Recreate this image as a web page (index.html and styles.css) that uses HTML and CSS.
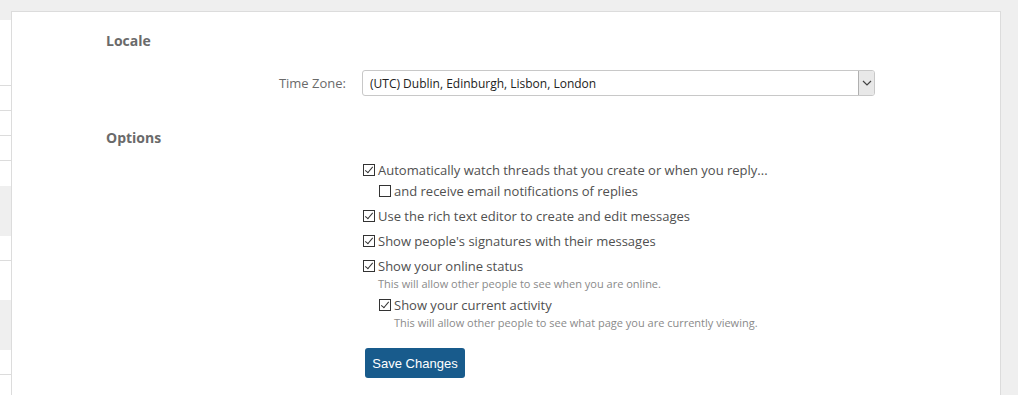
FILE: index.html
```html
<!DOCTYPE html>
<html>
<head>
<meta charset="utf-8">
<link rel="stylesheet" href="styles.css">
</head>
<body>
<div class="sidebar">
  <div class="srow s-gray" style="height:20px"></div>
  <div class="srow line" style="height:66px"></div>
  <div class="srow line" style="height:25px"></div>
  <div class="srow line" style="height:25px"></div>
  <div class="srow line" style="height:25px"></div>
  <div class="srow" style="height:25px"></div>
  <div class="srow s-gray" style="height:50px"></div>
  <div class="srow line" style="height:25px"></div>
  <div class="srow" style="height:39px"></div>
  <div class="srow s-gray" style="height:50px"></div>
  <div class="srow line" style="height:25px"></div>
  <div class="srow" style="height:20px"></div>
</div>
<div class="main">
  <div class="panel">
    <div class="content">
      <h3 class="heading">Locale</h3>
      <div class="form-row">
        <div class="label">Time Zone:</div>
        <div class="control">
          <div class="select">
            <span class="select-text">(UTC) Dublin, Edinburgh, Lisbon, London</span>
            <span class="select-arrow"><svg width="10" height="6" viewBox="0 0 10 6"><path d="M1 1 L5 5 L9 1" fill="none" stroke="#444" stroke-width="1.2"/></svg></span>
          </div>
        </div>
      </div>
      <h3 class="heading heading-options">Options</h3>
      <div class="form-row">
        <div class="label"></div>
        <div class="control">
          <ul class="checks">
            <li>
              <label class="check"><span class="box on"></span>Automatically watch threads that you create or when you reply...</label>
              <ul class="sub sub-first">
                <li><label class="check"><span class="box"></span>and receive email notifications of replies</label></li>
              </ul>
            </li>
            <li><label class="check"><span class="box on"></span>Use the rich text editor to create and edit messages</label></li>
            <li><label class="check"><span class="box on"></span>Show people's signatures with their messages</label></li>
            <li>
              <label class="check"><span class="box on"></span>Show your online status</label>
              <p class="hint">This will allow other people to see when you are online.</p>
              <ul class="sub sub-gap">
                <li>
                  <label class="check"><span class="box on"></span>Show your current activity</label>
                  <p class="hint">This will allow other people to see what page you are currently viewing.</p>
                </li>
              </ul>
            </li>
          </ul>
          <button class="btn">Save Changes</button>
        </div>
      </div>
    </div>
  </div>
</div>
</body>
</html>
```

FILE: styles.css
```css
html, body {
  margin: 0;
  padding: 0;
}
body {
  background: #efefef;
  display: flex;
  height: 395px;
  overflow: hidden;
  font-family: "Open Sans", "DejaVu Sans", sans-serif;
}
.sidebar {
  width: 11px;
  flex: none;
  display: flex;
  flex-direction: column;
  background: #fff;
}
.srow {
  flex: none;
  background: #fff;
  box-sizing: border-box;
}
.srow.line {
  border-bottom: 1px solid #dcdcdc;
}
.s-gray {
  background: #efefef;
}
.main {
  flex: 1;
  padding: 11px 17px 0 0;
}
.panel {
  background: #fff;
  border: 1px solid #dcdcdc;
  border-bottom: none;
  height: 100%;
  box-sizing: border-box;
}
.content {
  padding: 19px 0 0 94px;
}
.heading {
  margin: 0;
  font-size: 14px;
  font-weight: 700;
  line-height: 20px;
  color: #6a6a6a;
}
.heading-options {
  margin-top: 32px;
  margin-bottom: 12px;
}
.form-row {
  display: flex;
  margin-top: 19px;
}
.heading-options + .form-row {
  margin-top: 0;
}
.label {
  width: 240px;
  flex: none;
  text-align: right;
  font-size: 13px;
  color: #6a6a6a;
  line-height: 26px;
}
.control {
  margin-left: 16px;
}
.select {
  width: 513px;
  height: 26px;
  box-sizing: border-box;
  border: 1px solid #c8c8c8;
  border-radius: 3px;
  display: flex;
  align-items: center;
  justify-content: space-between;
}
.select-text {
  font-size: 12px;
  color: #222;
  padding: 1px 0 0 7px;
}
.select-arrow {
  width: 16px;
  height: 24px;
  box-sizing: border-box;
  border-left: 1px solid #b0b0b0;
  background: #e8e8e8;
  display: flex;
  align-items: center;
  justify-content: center;
  border-radius: 0 2px 2px 0;
}
.checks, .sub {
  list-style: none;
  margin: 0;
  padding: 0;
}
.checks > li {
  margin-bottom: 5px;
}
.sub {
  padding-left: 16px;
}
.sub-first {
  margin-top: 1px;
}
.sub-gap {
  margin-top: 3px;
}
.check {
  display: flex;
  align-items: center;
  font-size: 13px;
  line-height: 20px;
  color: #505050;
}
.box {
  width: 12px;
  height: 12px;
  border: 1px solid #333;
  box-sizing: border-box;
  margin: 0 3px 0 1px;
  position: relative;
  background: #fff;
  flex: none;
}
.box.on::after {
  content: "";
  position: absolute;
  left: 3px;
  top: 0px;
  width: 3px;
  height: 7px;
  border: solid #333;
  border-width: 0 1.3px 1.3px 0;
  transform: rotate(40deg);
}
.hint {
  margin: 0;
  padding-left: 16px;
  font-size: 11px;
  line-height: 16px;
  color: #8a8a8a;
}
.btn {
  display: block;
  margin-top: 17px;
  margin-left: 3px;
  width: 100px;
  height: 30px;
  background: #185b8c;
  color: #fff;
  border: none;
  border-radius: 3px;
  font-family: "Liberation Sans", Arial, sans-serif;
  font-size: 13px;
  padding: 0;
}
```
